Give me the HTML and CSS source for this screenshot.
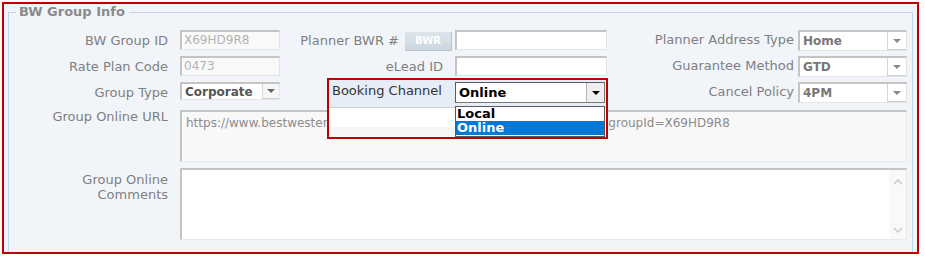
FILE: index.html
```html
<!DOCTYPE html>
<html>
<head>
<meta charset="utf-8">
<title>BW Group Info</title>
<link rel="stylesheet" href="styles.css">
</head>
<body>
<div class="frame">
  <fieldset class="group">
    <legend>BW Group Info</legend>
    <div class="form">
      <div class="lbl">BW Group ID</div>
      <div class="field disabled">X69HD9R8</div>
      <div class="lbl lbl-btn">Planner BWR # <span class="btn">BWR</span></div>
      <div class="field"></div>
      <div class="lbl lbl3">Planner Address Type</div>
      <div class="select sel3"><span class="val">Home</span><span class="arrow"></span></div>

      <div class="lbl">Rate Plan Code</div>
      <div class="field disabled">0473</div>
      <div class="lbl">eLead ID</div>
      <div class="field"></div>
      <div class="lbl lbl3">Guarantee Method</div>
      <div class="select sel3"><span class="val">GTD</span><span class="arrow"></span></div>

      <div class="lbl">Group Type</div>
      <div class="select sel1"><span class="val">Corporate</span><span class="arrow"></span></div>
      <div class="slot"></div>
      <div class="slot"></div>
      <div class="lbl lbl3">Cancel Policy</div>
      <div class="select sel3"><span class="val">4PM</span><span class="arrow"></span></div>

      <div class="lbl lbl-top">Group Online URL</div>
      <div class="area url">https://www.bestwestern.com/en_US/book/hotels/group-booking.html?groupId=X69HD9R8</div>

      <div class="lbl lbl-top2">Group Online<br>Comments</div>
      <div class="area comments">
        <div class="scroll">
          <svg width="10" height="7" viewBox="0 0 10 7"><polyline points="1,6 5,2 9,6" fill="none" stroke="#c9c9c9" stroke-width="1.5"/></svg>
          <svg width="10" height="7" viewBox="0 0 10 7"><polyline points="1,1 5,5 9,1" fill="none" stroke="#c9c9c9" stroke-width="1.5"/></svg>
        </div>
      </div>
    </div>
  </fieldset>

  <div class="callout">
    <div class="bc-label">Booking Channel</div>
    <div class="bc-select"><span class="val">Online</span><span class="bc-arrow"></span></div>
    <div class="bc-gap"></div>
    <ul class="bc-list">
      <li>Local</li>
      <li class="on">Online</li>
    </ul>
  </div>
</div>
</body>
</html>
```

FILE: styles.css
```css
* { box-sizing: border-box; }
html, body { margin: 0; padding: 0; background: #fff; }
body {
  font-family: "DejaVu Sans", Verdana, sans-serif;
  font-size: 13px;
  color: #7f7f7f;
}

.frame {
  position: relative;
  margin: 2px 0 0 2px;
  width: 917px;
  height: 252px;
  border: 2px solid #c00000;
  background: #f1f5fa;
  overflow: hidden;
}

.group {
  margin: 0 0 0 4px;
  padding: 0;
  width: 905px;
  height: 300px;
  min-width: 0;
  border: 1px solid #c5d5e9;
}

.group legend {
  margin-left: 7px;
  padding: 0 4px 0 3px;
  font-weight: bold;
  font-size: 13px;
  line-height: 16px;
  color: #8a8a8a;
}

.form {
  display: grid;
  grid-template-columns: 171px 100px 175px 152px 191px 109px;
  grid-template-rows: 22px 22px 22px 56px 78px;
  row-gap: 4px;
  margin-top: 10px;
}

.lbl {
  display: flex;
  align-items: center;
  justify-content: flex-end;
  padding-right: 12px;
  white-space: nowrap;
  line-height: 16px;
}
.lbl3 { padding-right: 4px; align-items: flex-start; padding-top: 2px; }
.lbl-btn { padding-right: 3px; gap: 6px; }
.lbl-top { align-items: flex-start; padding-top: 1px; }
.lbl-top2 { align-items: flex-start; text-align: right; padding-top: 4px; line-height: 15px; }

.btn {
  display: inline-flex;
  align-items: center;
  justify-content: center;
  width: 47px;
  height: 19px;
  margin-top: 1px;
  background: linear-gradient(#dde4ec, #cdd6e0);
  border-right: 1px solid #b9c3cf;
  border-bottom: 1px solid #b9c3cf;
  color: #fff;
  font-size: 10px;
  font-weight: bold;
}

.field {
  height: 20px;
  border-style: solid;
  border-width: 2px 1px 1px 2px;
  border-color: #c4c4c4 #e4e4e4 #e4e4e4 #c4c4c4;
  background: #fff;
  font-size: 12px;
  line-height: 17px;
  padding-left: 2px;
}
.disabled { background: #f9f9f9; color: #b3b3b3; }

.select {
  display: flex;
  border-style: solid;
  border-width: 2px 1px 1px 2px;
  border-color: #c4c4c4 #e4e4e4 #e4e4e4 #c4c4c4;
  background: #fff;
  font-size: 12px;
  font-weight: bold;
}
.select .val { flex: 1; padding-left: 3px; }
.sel1 { height: 18px; color: #555; line-height: 16px; }
.sel3 { height: 21px; color: #777; line-height: 19px; }

.arrow {
  position: relative;
  width: 17px;
  background: #f7f7f7;
  border-left: 1px solid #d6d6d6;
  border-bottom: 1px solid #d0d0d0;
}
.arrow::after {
  content: "";
  position: absolute;
  left: 50%;
  top: 50%;
  margin: -2px 0 0 -4px;
  border-left: 4px solid transparent;
  border-right: 4px solid transparent;
  border-top: 4px solid #666;
}
.sel3 .arrow { width: 19px; background: #fff; }
.sel3 .arrow::after { border-top-color: #8a8a8a; }

.area {
  grid-column: 2 / 7;
  border-style: solid;
  border-width: 2px 1px 1px 2px;
  border-color: #c4c4c4 #e8e8e8 #e8e8e8 #c4c4c4;
}
.url {
  margin-top: 2px;
  height: 52px;
  background: #f8f8f8;
  color: #8c8c8c;
  font-size: 12px;
  line-height: 14px;
  padding: 4px 4px;
  white-space: nowrap;
  overflow: hidden;
}
.comments {
  height: 72px;
  background: #fff;
  display: flex;
  justify-content: flex-end;
}
.scroll {
  width: 17px;
  background: #f9f9f9;
  display: flex;
  flex-direction: column;
  justify-content: space-between;
  align-items: center;
  padding: 8px 0 5px;
}
.scroll svg { display: block; }

.callout {
  position: absolute;
  left: 323px;
  top: 74px;
  width: 281px;
  height: 61px;
  border: 2px solid #c00000;
  background: linear-gradient(#e6edf6 0 27px, #cfcfcf 27px 28px, #fff 28px 47px, #f6f6f6 47px);
  display: grid;
  grid-template-columns: 126px 150px;
  grid-template-rows: 21px 31px;
  row-gap: 3px;
  padding-top: 2px;
}
.bc-label {
  padding-left: 3px;
  color: #333;
  font-size: 13px;
  line-height: 18px;
}
.bc-select {
  display: flex;
  border: 1px solid #7a7a7a;
  border-top-color: #5a5a5a;
  border-left-color: #5a5a5a;
  background: #fff;
  color: #000;
  font-weight: bold;
  font-size: 13px;
  line-height: 19px;
}
.bc-select .val { flex: 1; padding-left: 3px; }
.bc-arrow {
  position: relative;
  width: 18px;
  background: #efefef;
  border-left: 1px solid #b5b5b5;
}
.bc-arrow::after {
  content: "";
  position: absolute;
  left: 50%;
  top: 50%;
  margin: -2px 0 0 -4px;
  border-left: 4px solid transparent;
  border-right: 4px solid transparent;
  border-top: 4px solid #000;
}
.bc-list {
  margin: 0;
  padding: 0;
  list-style: none;
  border: 1px solid #5a5a5a;
  background: #fff;
  font-weight: bold;
  font-size: 13px;
  line-height: 14px;
  color: #000;
}
.bc-list li { padding-left: 1px; height: 14px; }
.bc-list li.on { background: #0078d7; color: #fff; }
```
